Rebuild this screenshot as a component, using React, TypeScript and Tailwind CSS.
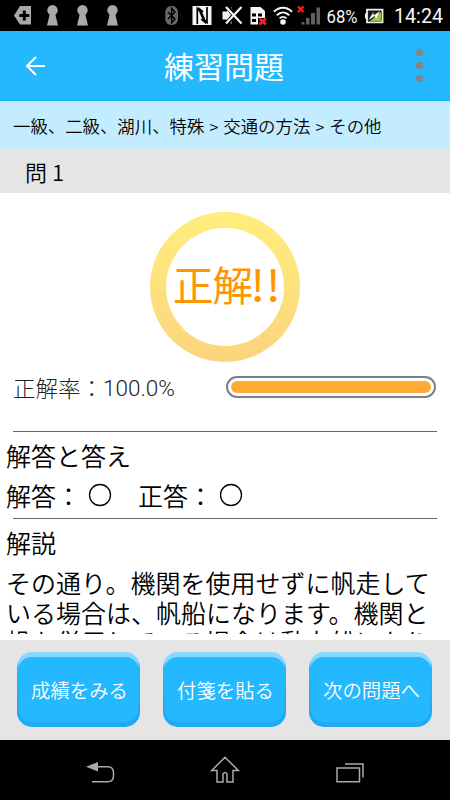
const StatusBar = () => (
    <div className="h-[31px] shrink-0 bg-black">
        <svg viewBox="0 0 450 31" className="w-full h-full">
            {/* Notifications */}
            <path d="M14 15.5 20 6h11v18.5H20z" fill="#a9a9a9" />
            <path d="M24.3 10.5v10M19.3 15.5h10" stroke="#000" strokeWidth="3" />
            {[52.5, 82.5, 112.5].map((x) => (
                <g key={x} fill="#a9a9a9">
                    <circle cx={x} cy="10.3" r="5.2" />
                    <path d={`M${x - 2.5} 13h5l3 12.5h-11z`} />
                </g>
            ))}

            {/* Bluetooth */}
            <rect x="165.3" y="6" width="12.7" height="19" rx="5.8" fill="#676767" />
            <path d="m168 12 7 7-3.3 3.5v-14L175 12l-7 7" fill="none" stroke="#000" strokeWidth="1.5" />

            {/* NFC */}
            <path d="M192.5 6h19v19h-19z" fill="#f5f5f5" />
            <path
                d="M197.3 24V8.5c3.500 3 6.500 8 7.500 13.500l-3.500-3M207 7v15.500c-3.500-3-6.500-8-7.500-13.500l3.500 3"
                fill="none"
                stroke="#000"
                strokeWidth="1.7"
            />

            {/* Muted speaker */}
            <path d="M222.5 11.5h4l5-4.5v17l-5-4.5h-4z" fill="#f5f5f5" />
            <path d="m226.5 6 15 18m0-18-15 18" stroke="#000" strokeWidth="4.5" />
            <path d="m226 7 15.5 16.5m0-16.5L226 23.5" stroke="#f5f5f5" strokeWidth="2.2" />

            {/* SIM error */}
            <path d="M250.5 7h10l4.5 4v13.5h-14.5z" fill="#f5f5f5" />
            <path d="M252 13.5h4v3h-4zM258 13.5h4v3h-4zM252 19h4v3h-4z" fill="#000" />
            <path d="M258 18h8v8h-8z" fill="#000" />
            <path d="m259.5 18.5 6.5 6m0-6-6.5 6" stroke="#ee2020" strokeWidth="2.8" />

            {/* Wifi */}
            <g fill="none" stroke="#f5f5f5" strokeWidth="2">
                <path d="M274 11.8c5.2-5.4 12.8-5.4 18 0" />
                <path d="M276.8 15.2c3.8-3.7 8.6-3.7 12.4 0" />
                <path d="M279.6 18.4c2-2 4.8-2 6.8 0" />
            </g>
            <circle cx="283" cy="22" r="2.8" fill="#f5f5f5" />

            {/* Signal */}
            <path d="M301.5 22h3v2.5h-3zM306 18h3.5v6.5H306zM311 13h4v11.5h-4zM316.5 7.5h3.5v17h-3.5z" fill="#606060" />
            <path d="m298 6.5 5.5 5.5m0-5.5L298 12" stroke="#ee2020" strokeWidth="2.4" />

            <text
                x="326.5"
                y="22.5"
                textLength="31"
                lengthAdjust="spacingAndGlyphs"
                className="font-['Roboto'] font-normal text-[18px]"
                fill="#f5f5f5"
            >
                68%
            </text>

            {/* Battery */}
            <path d="M367 9.7h15.5v12.6H367z" fill="#191919" stroke="#f0f0f0" strokeWidth="1.8" />
            <path d="M365 13.5h2v5h-2z" fill="#f0f0f0" />
            <path d="M381 12v9h-11z" fill="#91cc37" />
            <path d="m368.5 20 5-8v3.5L380 11l-4 8-1.3-3z" fill="#fff" />

            <text
                x="394"
                y="23"
                textLength="49"
                lengthAdjust="spacingAndGlyphs"
                className="font-['Roboto'] font-normal text-[20.5px]"
                fill="#f5f5f5"
            >
                14:24
            </text>
        </svg>
    </div>
);

const Header = () => (
    <header className="h-[70px] shrink-0 grid grid-cols-[1fr_auto_1fr] items-center bg-[#24b8ff] border-b border-[#12aef8] pl-[25px] pr-[27px]">
        <button aria-label="戻る">
            <svg width="21" height="20" viewBox="0 0 21 20" fill="none" stroke="#fff" strokeWidth="2">
                <path d="M20 10H2M11 1l-9 9 9 9" />
            </svg>
        </button>
        <h1 className="text-[30px] leading-[40px] font-normal text-white pb-[2px]">練習問題</h1>
        <button aria-label="メニュー" className="flex flex-col gap-[6px] justify-self-end">
            <span className="size-[7px] rounded-[3px] bg-[#858585]" />
            <span className="size-[7px] rounded-[3px] bg-[#858585]" />
            <span className="size-[7px] rounded-[3px] bg-[#858585]" />
        </button>
    </header>
);

const ResultRing = () => (
    <div className="mx-auto mt-[19px] size-[150px] shrink-0 rounded-full bg-linear-to-b from-[#ffee7d] to-[#fbd47d] p-4">
        <div className="size-full rounded-full bg-white">
            <svg viewBox="0 0 118 118" className="size-full">
                <text x="7" y="73" textLength="80" className="text-[40.5px] font-normal" fill="#ff9500">
                    正解
                </text>
                <text
                    x="84"
                    y="73"
                    textLength="31"
                    lengthAdjust="spacingAndGlyphs"
                    className="text-[43px] font-normal"
                    fill="#ff9500"
                >
                    !!
                </text>
            </svg>
        </div>
    </div>
);

const Circle = () => (
    <svg width="24" height="24" viewBox="0 0 24 24" fill="none" stroke="#000" strokeWidth="1.3">
        <circle cx="12" cy="12" r="10.5" />
    </svg>
);

const FooterButton = ({ label }: { label: string }) => (
    <button className="w-[123px] h-[75px] rounded-[15px] bg-linear-to-b from-[#89d8ff] from-12% via-[#24b8ff] via-20% to-[#21aaf0] to-80% px-[2px] py-[5px]">
        <span className="flex size-full items-center justify-center rounded-[12px] bg-[#24b8ff] pl-[2px] text-[19.4px] font-[350] text-white">
            {label}
        </span>
    </button>
);

const NavBar = () => (
    <nav className="h-[60px] shrink-0 bg-black">
        <svg viewBox="0 0 450 60" className="w-full h-full" fill="none" stroke="#aaa" strokeWidth="1.5">
            <path d="M97 26.7h10.5q6 0 6 6v3q0 6-6 6H92" />
            <path d="m86 26.7 12-4.7v9.5z" fill="#aaa" stroke="none" />
            <path d="m225 17.2-13.3 13.3h5.3v11.4h6V34q2-3 4 0v7.9h6V30.5h5.3z" />
            <path d="M337 28h22.5v13.7H337zM345 24h18v13.5" />
        </svg>
    </nav>
);

function App() {
    return (
        <div className="w-[450px] h-[800px] flex flex-col overflow-hidden bg-white text-black font-[350] font-['Noto_Sans_CJK_JP',sans-serif]">
            <StatusBar />
            <Header />

            {/* Breadcrumb */}
            <div className="h-[49px] shrink-0 bg-[#c4ecff] pl-[13px] text-[17.4px] leading-[49px] whitespace-nowrap">
                一級、二級、湖川、特殊
                <span className="inline-block w-[19px] text-center text-[16px]">&gt;</span>
                交通の方法
                <span className="inline-block w-[19px] text-center text-[16px]">&gt;</span>
                その他
            </div>
            <div className="h-[43px] shrink-0 bg-[#e5e5e5] pl-[25px] text-[22px] leading-[42px]">問 1</div>

            {/* Result */}
            <main className="h-[441px] shrink-0 flex flex-col overflow-hidden">
                <ResultRing />
                <div className="h-[69px] shrink-0 flex items-start justify-between pl-[13px] pr-[14px] pt-[9px]">
                    <div className="flex text-[22.5px] leading-[33px] text-[#222] font-light">
                        <span>正解率：</span>
                        <span className="font-['Roboto'] text-[22.5px] pt-px">100.0%</span>
                    </div>
                    <div className="mt-[5px] w-[210px] h-[22px] rounded-full border-2 border-[#75828b] p-[3px]">
                        <div className="h-full rounded-full bg-[#ffaa33]" />
                    </div>
                </div>
                <hr className="mx-[13px] shrink-0 border-[#666]" />

                <div className="h-[86px] shrink-0 pl-[6px] pt-[3px] text-[25px] leading-[40px]">
                    <h2>解答と答え</h2>
                    <div className="flex items-center">
                        <span className="w-[82px]">解答：</span>
                        <Circle />
                        <span className="w-[81px] ml-[26px]">正答：</span>
                        <Circle />
                    </div>
                </div>
                <hr className="mx-[13px] shrink-0 border-[#666]" />

                <div className="shrink-0 pl-[6px] pt-[3px] text-[25px] leading-[40px] whitespace-nowrap">
                    <h2>解説</h2>
                    <p className="mt-[6px] h-[66px] overflow-hidden leading-[29.5px]">
                        その通り。機関を使用せずに帆走して
                        <br />
                        いる場合は、帆船になります。機関と
                        <br />
                        帆を併用している場合は動力船になり
                    </p>
                </div>
            </main>

            {/* Actions */}
            <footer className="mt-[6px] h-[100px] shrink-0 flex items-start justify-between bg-[#e5e5e5] pl-[17px] pr-[18px] pt-[12px]">
                <FooterButton label="成績をみる" />
                <FooterButton label="付箋を貼る" />
                <FooterButton label="次の問題へ" />
            </footer>
            <NavBar />
        </div>
    );
}

export default App;
